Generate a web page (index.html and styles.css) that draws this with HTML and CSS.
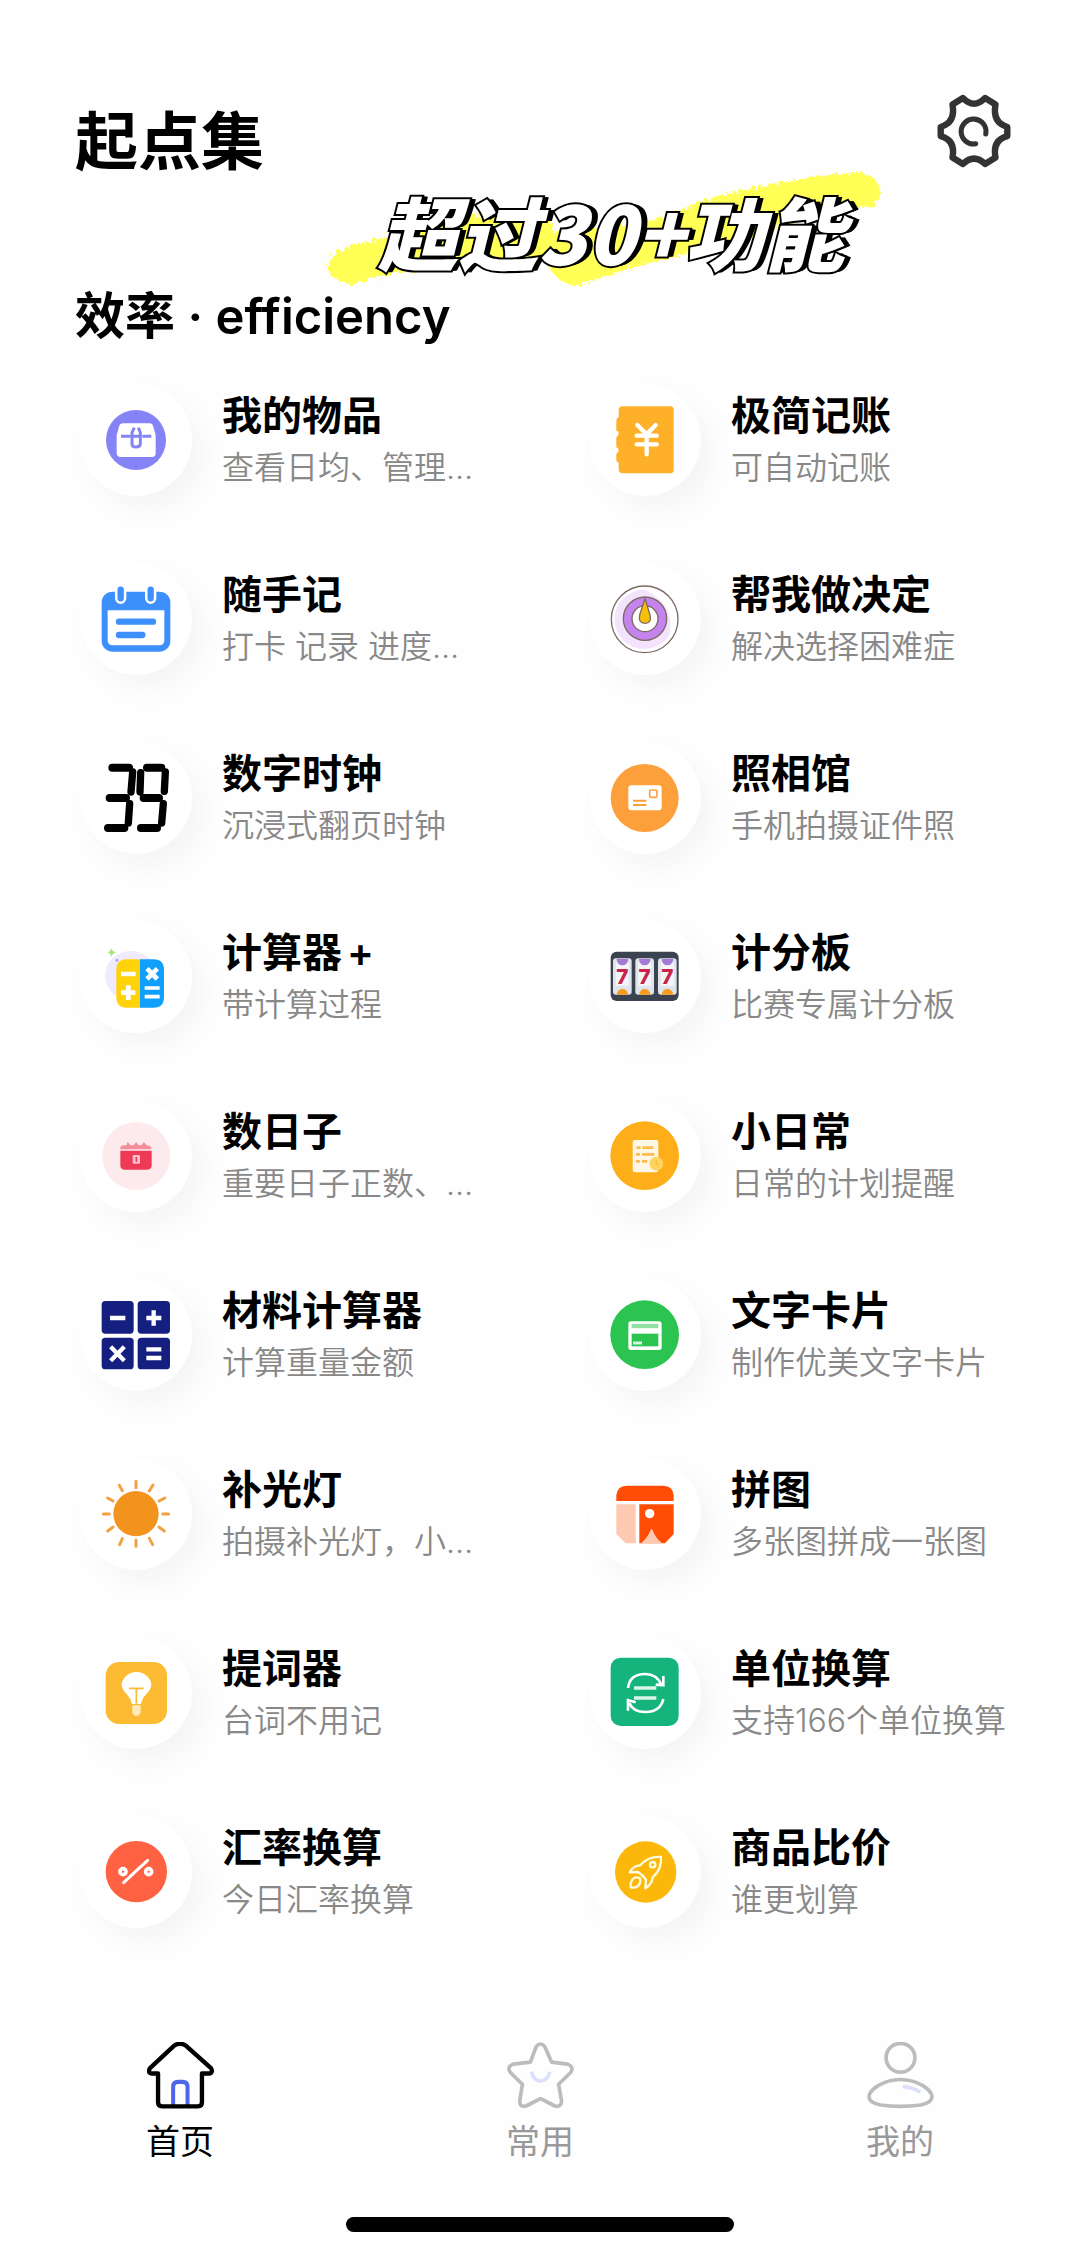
FILE: index.html
```html
<!DOCTYPE html>
<html lang="zh-CN">
<head>
<meta charset="utf-8">
<meta name="viewport" content="width=device-width, initial-scale=1">
<title>起点集</title>
<link rel="stylesheet" href="styles.css">
</head>
<body>
<div class="app">
  <header class="header">
    <h1 class="app-title">起点集</h1>
    <button class="settings" type="button" aria-label="设置">
      <svg viewBox="1190 100 226 226" fill="none" stroke="#333" stroke-width="19" stroke-linecap="round" stroke-linejoin="round">
        <path d="M1270 115Q1303 149 1336 115L1367 134Q1357 188 1402 201V228Q1357 240 1367 292L1336 311Q1303 279 1270 311L1239 292Q1249 240 1204 228V201Q1249 188 1239 134Z"/>
        <path d="M1338 222A37 37 0 1 0 1308 251" stroke-width="15"/>
      </svg>
    </button>
    <div class="banner">
      <svg class="brush" viewBox="0 0 570 135" aria-hidden="true">
        <filter id="rough" x="-5%" y="-10%" width="110%" height="120%">
          <feTurbulence type="fractalNoise" baseFrequency="0.25" numOctaves="2" seed="4"/>
          <feDisplacementMap in="SourceGraphic" scale="9"/>
        </filter>
        <path filter="url(#rough)" fill="#ffff57" d="M7 106L13 94Q30 85 60 78L150 55L232 52V72L330 62L385 40Q460 18 540 12L556 19L561 33L553 46L530 50Q480 57 430 78L345 99Q300 110 258 125Q242 126 232 112L222 96L150 103L75 113L30 125L10 116Z"/>
      </svg>
      <p class="banner-text">超过30+功能</p>
    </div>
  </header>

  <main>
    <h2 class="section-title">效率 <span class="latin">· efficiency</span></h2>
    <div class="tools">
      <a class="tool" href="#items">
        <span class="badge"><svg viewBox="61 42 336 336">
          <circle cx="229" cy="210" r="90" fill="#8683f6"/>
          <path d="M190 160H270Q278 160 281 170L288 195V250Q288 261 277 261H183Q171 261 171 250V195L178 170Q181 160 190 160Z" fill="#fff"/>
          <path d="M184 199H212M248 199H275M224 173L217 188V222Q217 231 229 231T242 222V188L236 173M217 199H242" fill="none" stroke="#8683f6" stroke-width="9"/>
        </svg></span>
        <span class="label"><span class="name">我的物品</span><span class="desc">查看日均、管理…</span></span>
      </a>
      <a class="tool" href="#ledger">
        <span class="badge"><svg viewBox="58 42 336 336">
          <path d="M160 109H302Q312 109 312 120V300Q312 310 302 310H160Q147 310 147 298V278Q140 276 140 270V251Q147 248 147 241T140 232V202Q147 198 147 190T140 182V152Q140 145 147 142V121Q147 109 160 109Z" fill="#fdb028"/>
          <path d="M203 165L231 193L258 165M201 197H261M201 223H261M231 193V253" fill="none" stroke="#fff" stroke-width="13" stroke-linecap="round"/>
        </svg></span>
        <span class="label"><span class="name">极简记账</span><span class="desc">可自动记账</span></span>
      </a>
      <a class="tool" href="#notes">
        <span class="badge"><svg viewBox="61 580 336 336">
          <rect x="126" y="666" width="206" height="180" rx="32" fill="#3d90fb"/>
          <path d="M144 722H314V812Q314 827 299 827H159Q144 827 144 812Z" fill="#fff"/>
          <path d="M183 662V686M273 662V686" stroke="#fff" stroke-width="34" stroke-linecap="round"/>
          <path d="M183 660V686M273 660V686M178 756H280M178 796H248" stroke="#3d90fb" stroke-width="19" stroke-linecap="round"/>
        </svg></span>
        <span class="label"><span class="name">随手记</span><span class="desc">打卡 记录 进度…</span></span>
      </a>
      <a class="tool" href="#decide">
        <span class="badge"><svg viewBox="58 580 336 336" stroke="#7d6a62" stroke-width="4">
          <circle cx="225" cy="749" r="100" fill="#fff"/>
          <path d="M225 660A89 89 0 1 0 300 795Q315 700 225 660Z" fill="#f3e3fc" stroke="none"/>
          <circle cx="226" cy="747" r="65" fill="#c583ee"/>
          <circle cx="226" cy="747" r="39" fill="#fff"/>
          <path d="M226 687L241 736Q247 761 226 761T210 736Z" fill="#f6bf0a"/>
        </svg></span>
        <span class="label"><span class="name">帮我做决定</span><span class="desc">解决选择困难症</span></span>
      </a>
      <a class="tool" href="#clock">
        <span class="badge"><svg viewBox="61 1118 336 336">
          <g fill="none" stroke="#000" stroke-linecap="round">
            <path d="M158 1195H208M150 1286H199M145 1376H194M262 1195H305M252 1286H298M244 1376H292" stroke-width="24"/>
            <path d="M219 1208L214 1268M210 1303L206 1361M243 1210L241 1268M317 1208L314 1266M311 1303L306 1361" stroke-width="22"/>
          </g>
        </svg></span>
        <span class="label"><span class="name">数字时钟</span><span class="desc">沉浸式翻页时钟</span></span>
      </a>
      <a class="tool" href="#photo">
        <span class="badge"><svg viewBox="58 1118 336 336">
          <circle cx="225" cy="1286" r="102" fill="#fda03c"/>
          <rect x="176" y="1248" width="100" height="75" rx="9" fill="#fff"/>
          <rect x="240" y="1262" width="22" height="22" rx="4" fill="none" stroke="#fda03c" stroke-width="5"/>
          <path d="M190 1294H230M190 1307H230" stroke="#fda03c" stroke-width="6"/>
        </svg></span>
        <span class="label"><span class="name">照相馆</span><span class="desc">手机拍摄证件照</span></span>
      </a>
      <a class="tool" href="#calculator">
        <span class="badge"><svg viewBox="61 66 336 336">
          <ellipse cx="214" cy="230" rx="78" ry="74" fill="#efeafd"/>
          <path d="M155 147Q158 158 169 160Q158 163 155 174Q153 163 144 160Q153 158 155 147Z" fill="#a5e57c"/>
          <circle cx="172" cy="184" r="4" fill="#a79be8"/>
          <path d="M241 181V326H201Q170 326 170 294V213Q170 181 201 181Z" fill="#ffd20a"/>
          <path d="M241 181H282Q313 181 313 213V294Q313 326 282 326H241Z" fill="#109ffb"/>
          <path d="M184 225H228M184 281H227M206 259V303M262 209L293 240M293 209L262 240" stroke="#fff" stroke-width="14"/>
          <path d="M255 267H300M255 293H300" stroke="#fff" stroke-width="11"/>
        </svg></span>
        <span class="label"><span class="name name-plus">计算器<span>+</span></span><span class="desc">带计算过程</span></span>
      </a>
      <a class="tool" href="#score">
        <span class="badge"><svg viewBox="58 66 336 336">
          <rect x="123" y="158" width="204" height="148" rx="18" fill="#3c4350"/>
          <g fill="#dfe5eb"><rect x="130" y="178" width="56" height="109" rx="9"/><rect x="197" y="178" width="56" height="109" rx="9"/><rect x="265" y="178" width="56" height="109" rx="9"/></g>
          <g fill="#f3f5f8"><rect x="139" y="190" width="38" height="70"/><rect x="206" y="190" width="38" height="70"/><rect x="274" y="190" width="38" height="70"/></g>
          <path d="M141 180H176Q173 199 158 199T141 180ZM208 180H243Q240 199 225 199T208 180ZM276 180H311Q308 199 293 199T276 180Z" fill="#a678d8"/>
          <path d="M141 287Q144 270 158 270T176 287ZM208 287Q211 270 225 270T243 287ZM276 287Q279 270 293 270T311 287Z" fill="#f79b1e"/>
          <g class="reel"><text x="158" y="255">7</text><text x="225" y="255">7</text><text x="293" y="255">7</text></g>
        </svg></span>
        <span class="label"><span class="name">计分板</span><span class="desc">比赛专属计分板</span></span>
      </a>
      <a class="tool" href="#days">
        <span class="badge"><svg viewBox="61 604 336 336">
          <circle cx="230" cy="772" r="102" fill="#fdeaec"/>
          <path d="M182 752V748Q182 740 192 740H200L204 730L212 740H221L229 731L238 740H246L252 730L261 740Q275 740 275 749V752Z" fill="#f28f9b"/>
          <path d="M182 756H276V800Q276 813 263 813H194Q182 813 182 800Z" fill="#ee3a56"/>
          <rect x="219" y="769" width="22" height="26" rx="4" fill="#fbc4cb"/>
          <path d="M230 775V790" stroke="#ee3a56" stroke-width="5"/>
        </svg></span>
        <span class="label"><span class="name">数日子</span><span class="desc">重要日子正数、…</span></span>
      </a>
      <a class="tool" href="#daily">
        <span class="badge"><svg viewBox="58 604 336 336">
          <circle cx="225" cy="771" r="103" fill="#fdae19"/>
          <rect x="189" y="724" width="77" height="97" rx="7" fill="#fff7e6"/>
          <path d="M201 747H213M218 747H251M199 767H211M217 767H254M199 788H211M217 788H233" stroke="#fdbd4d" stroke-width="8"/>
          <circle cx="260" cy="795" r="21" fill="#fed45f"/>
          <path d="M260 784V797H269" fill="none" stroke="#fdbb33" stroke-width="3"/>
        </svg></span>
        <span class="label"><span class="name">小日常</span><span class="desc">日常的计划提醒</span></span>
      </a>
      <a class="tool" href="#material">
        <span class="badge"><svg viewBox="61 1139 336 336">
          <g fill="#151f80"><rect x="126" y="1205" width="96" height="98" rx="11"/><rect x="234" y="1205" width="97" height="98" rx="11"/><rect x="126" y="1315" width="96" height="95" rx="11"/><rect x="234" y="1315" width="97" height="95" rx="11"/></g>
          <path d="M151 1256H197M260 1256H305M282 1233V1279M153 1342L194 1384M194 1342L153 1384M260 1350H305M260 1376H305" stroke="#fff" stroke-width="13"/>
        </svg></span>
        <span class="label"><span class="name">材料计算器</span><span class="desc">计算重量金额</span></span>
      </a>
      <a class="tool" href="#cards">
        <span class="badge"><svg viewBox="58 1139 336 336">
          <circle cx="225" cy="1306" r="103" fill="#2bc450"/>
          <rect x="176" y="1266" width="100" height="86" rx="8" fill="#fff"/>
          <path d="M186 1280H266" stroke="#8fe0a2" stroke-width="13"/>
          <path d="M186 1303H266V1341H186Z" fill="#2bc450"/>
          <path d="M190 1331H217" stroke="#d5f5dc" stroke-width="9"/>
        </svg></span>
        <span class="label"><span class="name">文字卡片</span><span class="desc">制作优美文字卡片</span></span>
      </a>
      <a class="tool" href="#light">
        <span class="badge"><svg viewBox="61 58 336 336">
          <circle cx="229" cy="225" r="68" fill="#f2931e"/>
          <path d="M229 128V147M229 304V323M131 226H149M309 226H327M179 140L188 156M280 139L269 157M144 178L160 187M315 178L299 187M144 277L160 265M314 277L298 265M180 318L188 300M279 318L269 299" stroke="#f2a142" stroke-width="9" stroke-linecap="round"/>
        </svg></span>
        <span class="label"><span class="name">补光灯</span><span class="desc">拍摄补光灯，小…</span></span>
      </a>
      <a class="tool" href="#collage">
        <span class="badge"><svg viewBox="58 58 336 336">
          <path d="M140 187V170Q142 142 171 141H281Q310 142 312 170V187Z" fill="#ff4d05"/>
          <path d="M140 197H198V314H168L140 286Z" fill="#ffc8b0"/>
          <path d="M209 197H312V286L286 314H209Z" fill="#ff4d05"/>
          <path d="M214 314Q228 302 236 288L246 269L255 288Q263 302 277 314Z" fill="#ffc8b0"/>
          <circle cx="240" cy="225" r="14" fill="#fff"/>
        </svg></span>
        <span class="label"><span class="name">拼图</span><span class="desc">多张图拼成一张图</span></span>
      </a>
      <a class="tool" href="#prompter">
        <span class="badge"><svg viewBox="61 597 336 336">
          <rect x="138" y="672" width="184" height="186" rx="40" fill="#fdbb33"/>
          <path d="M217 798Q214 783 201 768Q186 754 186 738A45 42 0 0 1 275 738Q275 754 260 768Q246 783 244 798Z" fill="#fff"/>
          <path d="M218 802H243V823Q240 834 230 834T218 823Z" fill="#feeabb"/>
          <path d="M208 751H252M230 751V797" stroke="#fdbb33" stroke-width="5"/>
        </svg></span>
        <span class="label"><span class="name">提词器</span><span class="desc">台词不用记</span></span>
      </a>
      <a class="tool" href="#units">
        <span class="badge"><svg viewBox="58 597 336 336">
          <rect x="123" y="659" width="204" height="205" rx="30" fill="#14b47c"/>
          <path d="M175 750Q180 708 227 708Q261 708 276 741M281 714V742L258 740M281 783Q272 822 227 822Q190 822 179 795M175 818V787L198 793" fill="none" stroke="#fff" stroke-width="8"/>
          <path d="M193 750H260M193 780H260" stroke="#d9f5ea" stroke-width="11"/>
        </svg></span>
        <span class="label"><span class="name">单位换算</span><span class="desc">支持166个单位换算</span></span>
      </a>
      <a class="tool" href="#rates">
        <span class="badge"><svg viewBox="61 1135 336 336" fill="none" stroke="#fff">
          <circle cx="230" cy="1302" r="92" fill="#ff6243" stroke="none"/>
          <circle cx="190" cy="1302" r="9" stroke-width="11"/>
          <circle cx="267" cy="1302" r="9" stroke-width="11"/>
          <path d="M192 1335L224 1305M227 1302L264 1268" stroke-width="9" stroke-linecap="round"/>
        </svg></span>
        <span class="label"><span class="name">汇率换算</span><span class="desc">今日汇率换算</span></span>
      </a>
      <a class="tool" href="#compare">
        <span class="badge"><svg viewBox="58 1135 336 336" fill="none" stroke="#fffbe0" stroke-width="7" stroke-linejoin="round">
          <circle cx="228" cy="1303" r="92" fill="#fcb80a" stroke="none"/>
          <path d="M274 1258Q236 1255 212 1283Q192 1283 180 1304L205 1303Q219 1312 229 1326L227 1352Q247 1340 249 1319Q277 1294 274 1258Z"/>
          <circle cx="249" cy="1281" r="8"/>
          <path d="M210 1321Q194 1315 187 1328Q181 1337 183 1349Q196 1352 205 1345Q216 1334 210 1321Z"/>
        </svg></span>
        <span class="label"><span class="name">商品比价</span><span class="desc">谁更划算</span></span>
      </a>
    </div>
  </main>

  <nav class="tabs">
    <a class="tab tab-active" href="#home" aria-current="page">
      <svg viewBox="142 124 200 200" fill="none" stroke="#000" stroke-width="13" stroke-linejoin="round">
        <path d="M220 317V258Q220 243 235 243H248Q263 243 263 258V317" stroke="#5066e8" stroke-width="12"/>
        <path d="M224 134Q240 125 257 134L333 202Q340 216 328 218H306V304Q306 316 294 316H188Q175 316 175 304V218H156Q143 216 151 202Z"/>
      </svg>
      首页
    </a>
    <a class="tab" href="#favorites">
      <svg viewBox="1226 124 200 200" fill="none" stroke="#bcbcbc" stroke-width="11" stroke-linejoin="round">
        <path d="M1313 138Q1326 122 1339 138L1359 184L1407 190Q1427 198 1416 215L1380 250L1389 300Q1388 320 1369 315L1326 293L1283 315Q1264 320 1264 300L1272 250L1236 215Q1225 198 1244 190L1296 184Z"/>
        <path d="M1299 213Q1306 241 1326 241T1354 213" stroke="#dde0fb"/>
      </svg>
      常用
    </a>
    <a class="tab" href="#mine">
      <svg viewBox="1110 124 200 200" fill="none" stroke="#bcbcbc" stroke-width="11">
        <circle cx="1210" cy="171" r="43"/>
        <path d="M1210 236Q1247 236 1278 255Q1304 272 1304 287Q1304 306 1270 312Q1210 320 1150 312Q1116 306 1116 287Q1116 272 1142 255Q1173 236 1210 236Z"/>
        <path d="M1217 257Q1246 258 1269 274" stroke="#dde0fb"/>
      </svg>
      我的
    </a>
  </nav>
  <div class="home-indicator"></div>
</div>
</body>
</html>
```
FILE: styles.css
```css
* {
  box-sizing: border-box;
}

body {
  margin: 0;
  background: #fefefe;
  color: #000;
  font-family: Inter, "Noto Sans CJK SC", sans-serif;
}

h1,
h2,
p {
  margin: 0;
}

a {
  color: inherit;
  text-decoration: none;
}

svg {
  display: block;
}

.app {
  display: flex;
  flex-direction: column;
  min-height: 100vh;
  padding-bottom: 20px;
}

.header {
  position: relative;
  display: flex;
  justify-content: space-between;
  align-items: flex-start;
  padding: 94px 68px 0 75px;
}

.app-title {
  font-size: 63px;
  font-weight: 600;
  line-height: 94px;
}

.settings {
  width: 76px;
  height: 76px;
  margin-top: -1px;
  padding: 0;
  border: 0;
  background: none;
}

/* Promotional sticker laid over the header */
.banner {
  position: absolute;
  top: 160px;
  left: 320px;
  width: 570px;
}

.brush {
  width: 100%;
  overflow: visible;
}

.banner-text {
  position: absolute;
  top: 22px;
  left: 58px;
  color: #fff;
  font-family: "Noto Sans CJK SC", sans-serif;
  font-size: 80px;
  font-style: italic;
  font-weight: 900;
  line-height: 96px;
  white-space: nowrap;
  -webkit-text-stroke: 4px #000;
  paint-order: stroke fill;
  text-shadow: 1px 0 #000, 2px 0 #000, 3px 0 #000, 4px 0 #000, 5px 0 #000, 6px 0 #000;
}

.section-title {
  padding: 98px 75px 0;
  font-size: 50px;
  font-weight: 600;
  line-height: 60px;
}

.latin {
  font-size: 49px;
}

.tools {
  display: grid;
  grid-template-columns: 1fr 1fr;
  gap: 67px 58px;
  padding: 37px 40px 0 80px;
}

.tool {
  display: flex;
  align-items: center;
  gap: 30px;
}

.badge {
  flex: none;
  width: 112px;
  height: 112px;
  border-radius: 50%;
  background: #fff;
  box-shadow: 12px 14px 28px rgba(0, 0, 0, 0.04);
}

.badge svg {
  width: 112px;
  height: 112px;
}

.reel {
  fill: #c8234a;
  font-family: Inter, sans-serif;
  font-size: 62px;
  font-weight: 800;
  text-anchor: middle;
}

.label {
  display: flex;
  flex-direction: column;
  padding-top: 4px;
  line-height: 52px;
  white-space: nowrap;
}

.name {
  font-size: 40px;
  font-weight: 600;
}

.name-plus {
  display: flex;
  gap: 5px;
}

.desc {
  color: #888;
  font-size: 32px;
  font-weight: 350;
}

.tabs {
  display: grid;
  grid-template-columns: repeat(3, 1fr);
  margin-top: auto;
  padding-bottom: 50px;
}

.tab {
  display: flex;
  flex-direction: column;
  align-items: center;
  gap: 8px;
  color: #999;
  font-size: 34px;
  line-height: 50px;
}

.tab svg {
  width: 67px;
  height: 67px;
}

.tab-active {
  color: #000;
}

.home-indicator {
  width: 36%;
  height: 15px;
  margin: 0 auto;
  border-radius: 8px;
  background: #000;
}
```
